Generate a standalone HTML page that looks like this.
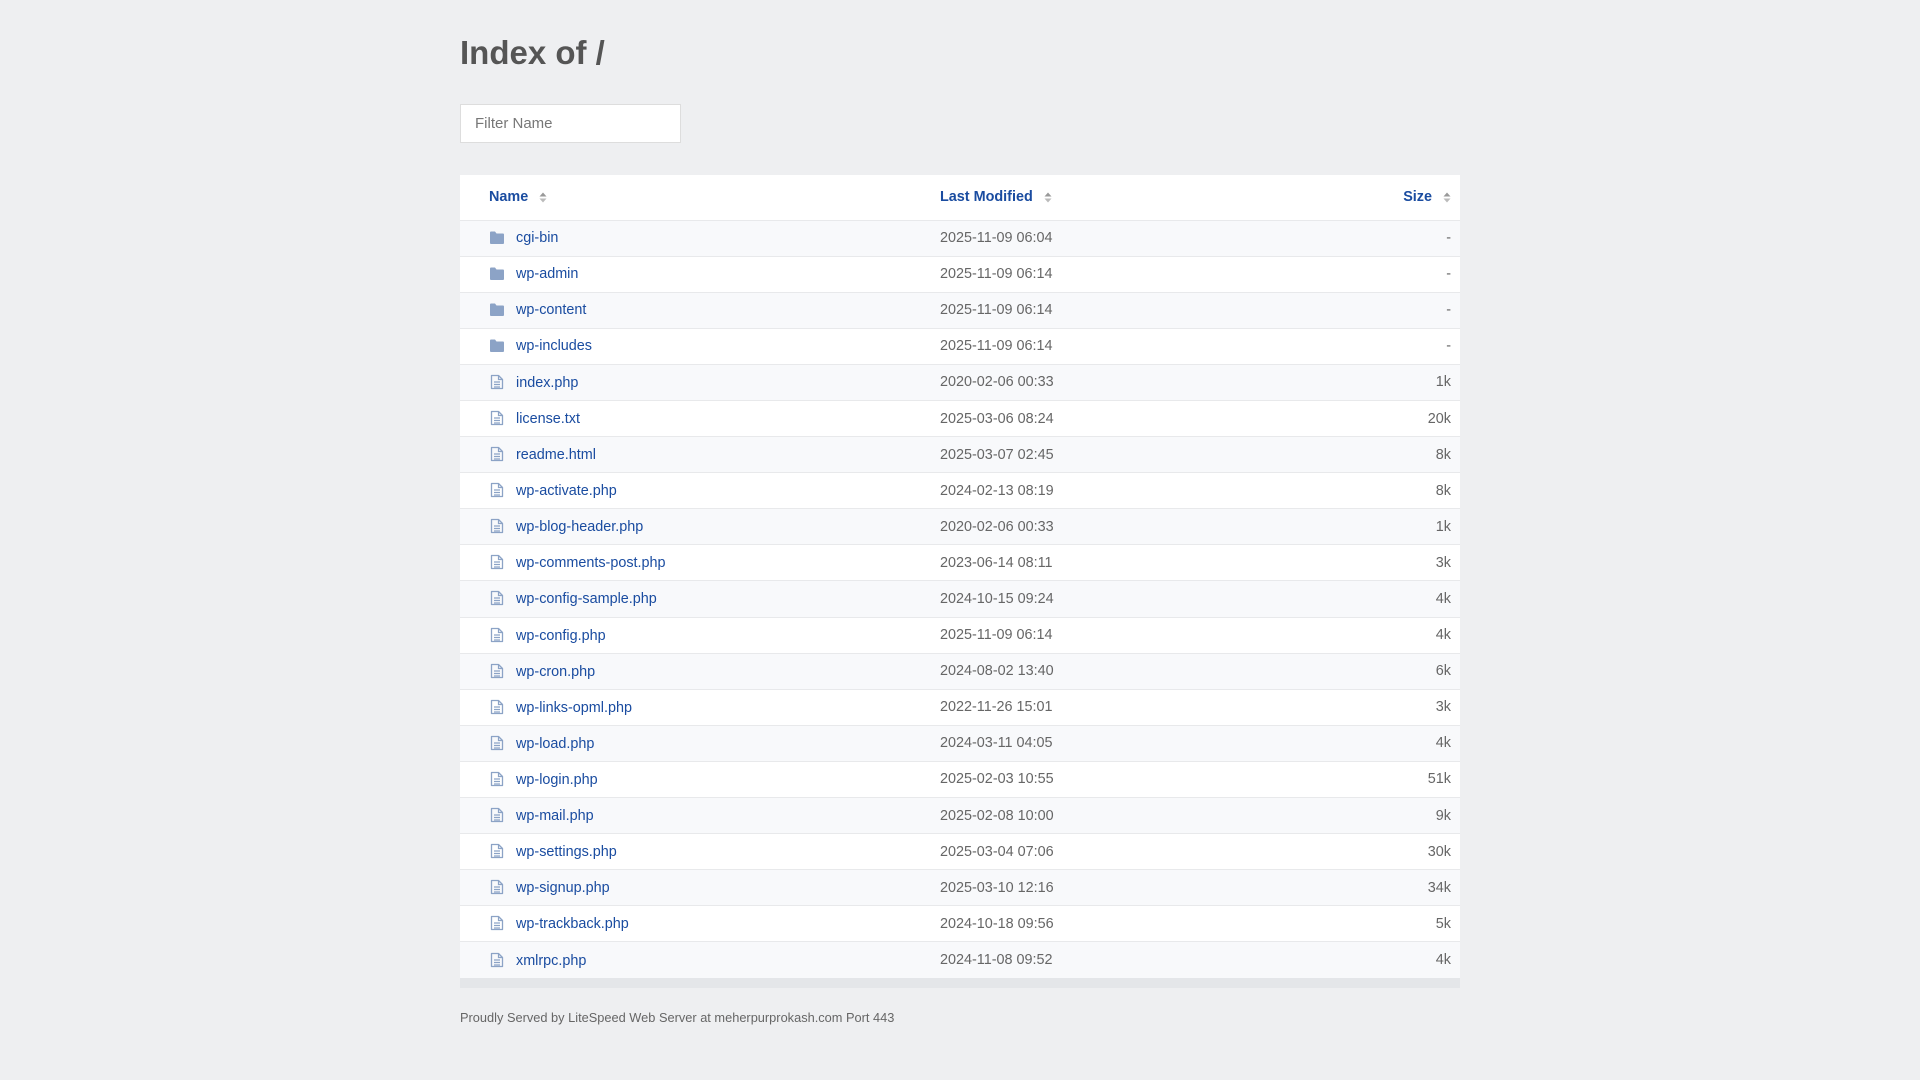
<!DOCTYPE html>
<html><head><meta charset="utf-8"><style>
html,body{margin:0;padding:0;background:#eeeff1;}
body{font-family:"Liberation Sans",Arial,sans-serif;color:#666;width:1920px;height:1080px;overflow:hidden;}
.wrap{position:absolute;left:460px;top:0;width:1000px;}
h1{position:absolute;left:0;top:33px;margin:0;font-size:33px;font-weight:bold;color:#555;line-height:40px;}
.filter{position:absolute;left:0;top:104px;background:#fff;border:1px solid #ddd;box-sizing:border-box;width:221px;height:39px;font-size:15px;color:#777;padding:0 0 0 14px;line-height:37px;}
table{position:absolute;left:0;top:175px;width:1000px;border-collapse:collapse;background:#fff;font-size:14.4px;}
th{height:45px;text-align:left;font-weight:bold;color:#1a4ca0;padding:0;border-bottom:1px solid #e8e9eb;box-sizing:border-box;}
td{height:36.1px;padding:0;border-top:1px solid #e8e9eb;box-sizing:border-box;}
tbody tr:nth-child(odd) td{background:#f8f9fb;}
a{color:#1a4ca0;text-decoration:none;}
.n{width:480px;padding-left:29px;}
.n svg.i{vertical-align:-3px;margin-right:11px;}
.d{color:#666;width:300px;}
.s{text-align:right;padding-right:9px;}
.sort{display:inline-block;vertical-align:-2px;margin-left:11px;}
.strip{position:absolute;left:0;top:978px;width:1000px;height:10px;background:#e4e6e9;}
.foot{position:absolute;left:0;top:1010px;font-size:12.8px;color:#666;}
</style></head><body>
<svg width="0" height="0" style="position:absolute"><defs>
<symbol id="fo" viewBox="0 0 16 14"><path d="M1 1.5Q1 .5 2 .5h4l1.5 2H14q1 0 1 1V12q0 1-1 1H2q-1 0-1-1z" fill="#8ca3c6"/></symbol>
<symbol id="fi" viewBox="0 0 14 16"><path d="M1.5 1.5h7l4 4v9h-11z" fill="none" stroke="#8ca3c6" stroke-width="1.3" stroke-linejoin="round"/><path d="M8.5 1.5v4h4M4 8h6M4 10.5h6M4 13h6" fill="none" stroke="#8ca3c6" stroke-width="1.2"/></symbol>
<symbol id="so" viewBox="0 0 8 12"><path d="M4 1.5L7.5 5.5H.5z" fill="#999"/><path d="M4 11.5L7.5 7.5H.5z" fill="#bbb"/></symbol>
</defs></svg>
<div class="wrap">
<h1>Index of /</h1>
<div class="filter">Filter Name</div>
<table>
<thead><tr>
<th class="n">Name<svg class="sort" width="8" height="12"><use href="#so"/></svg></th>
<th class="d" style="color:#1a4ca0">Last Modified<svg class="sort" width="8" height="12"><use href="#so"/></svg></th>
<th class="s">Size<svg class="sort" width="8" height="12"><use href="#so"/></svg></th>
</tr></thead>
<tbody>
<tr><td class="n"><svg class="i" width="16" height="14"><use href="#fo"/></svg><a>cgi-bin</a></td><td class="d">2025-11-09 06:04</td><td class="s">-</td></tr>
<tr><td class="n"><svg class="i" width="16" height="14"><use href="#fo"/></svg><a>wp-admin</a></td><td class="d">2025-11-09 06:14</td><td class="s">-</td></tr>
<tr><td class="n"><svg class="i" width="16" height="14"><use href="#fo"/></svg><a>wp-content</a></td><td class="d">2025-11-09 06:14</td><td class="s">-</td></tr>
<tr><td class="n"><svg class="i" width="16" height="14"><use href="#fo"/></svg><a>wp-includes</a></td><td class="d">2025-11-09 06:14</td><td class="s">-</td></tr>
<tr><td class="n"><svg class="i" width="16" height="16"><use href="#fi"/></svg><a>index.php</a></td><td class="d">2020-02-06 00:33</td><td class="s">1k</td></tr>
<tr><td class="n"><svg class="i" width="16" height="16"><use href="#fi"/></svg><a>license.txt</a></td><td class="d">2025-03-06 08:24</td><td class="s">20k</td></tr>
<tr><td class="n"><svg class="i" width="16" height="16"><use href="#fi"/></svg><a>readme.html</a></td><td class="d">2025-03-07 02:45</td><td class="s">8k</td></tr>
<tr><td class="n"><svg class="i" width="16" height="16"><use href="#fi"/></svg><a>wp-activate.php</a></td><td class="d">2024-02-13 08:19</td><td class="s">8k</td></tr>
<tr><td class="n"><svg class="i" width="16" height="16"><use href="#fi"/></svg><a>wp-blog-header.php</a></td><td class="d">2020-02-06 00:33</td><td class="s">1k</td></tr>
<tr><td class="n"><svg class="i" width="16" height="16"><use href="#fi"/></svg><a>wp-comments-post.php</a></td><td class="d">2023-06-14 08:11</td><td class="s">3k</td></tr>
<tr><td class="n"><svg class="i" width="16" height="16"><use href="#fi"/></svg><a>wp-config-sample.php</a></td><td class="d">2024-10-15 09:24</td><td class="s">4k</td></tr>
<tr><td class="n"><svg class="i" width="16" height="16"><use href="#fi"/></svg><a>wp-config.php</a></td><td class="d">2025-11-09 06:14</td><td class="s">4k</td></tr>
<tr><td class="n"><svg class="i" width="16" height="16"><use href="#fi"/></svg><a>wp-cron.php</a></td><td class="d">2024-08-02 13:40</td><td class="s">6k</td></tr>
<tr><td class="n"><svg class="i" width="16" height="16"><use href="#fi"/></svg><a>wp-links-opml.php</a></td><td class="d">2022-11-26 15:01</td><td class="s">3k</td></tr>
<tr><td class="n"><svg class="i" width="16" height="16"><use href="#fi"/></svg><a>wp-load.php</a></td><td class="d">2024-03-11 04:05</td><td class="s">4k</td></tr>
<tr><td class="n"><svg class="i" width="16" height="16"><use href="#fi"/></svg><a>wp-login.php</a></td><td class="d">2025-02-03 10:55</td><td class="s">51k</td></tr>
<tr><td class="n"><svg class="i" width="16" height="16"><use href="#fi"/></svg><a>wp-mail.php</a></td><td class="d">2025-02-08 10:00</td><td class="s">9k</td></tr>
<tr><td class="n"><svg class="i" width="16" height="16"><use href="#fi"/></svg><a>wp-settings.php</a></td><td class="d">2025-03-04 07:06</td><td class="s">30k</td></tr>
<tr><td class="n"><svg class="i" width="16" height="16"><use href="#fi"/></svg><a>wp-signup.php</a></td><td class="d">2025-03-10 12:16</td><td class="s">34k</td></tr>
<tr><td class="n"><svg class="i" width="16" height="16"><use href="#fi"/></svg><a>wp-trackback.php</a></td><td class="d">2024-10-18 09:56</td><td class="s">5k</td></tr>
<tr><td class="n"><svg class="i" width="16" height="16"><use href="#fi"/></svg><a>xmlrpc.php</a></td><td class="d">2024-11-08 09:52</td><td class="s">4k</td></tr>
</tbody></table>
<div class="strip"></div>
<div class="foot">Proudly Served by LiteSpeed Web Server at meherpurprokash.com Port 443</div>
</div>
</body></html>
